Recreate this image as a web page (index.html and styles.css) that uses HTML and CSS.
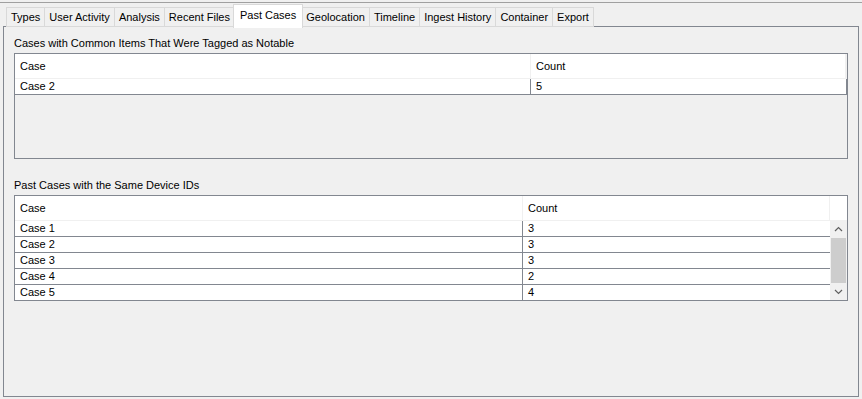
FILE: index.html
```html
<!DOCTYPE html>
<html lang="en">
<head>
    <meta charset="UTF-8">
    <title>Past Cases</title>
    <link rel="stylesheet" href="styles.css">
</head>
<body>
    <div class="frame">
        <div class="tabs">
            <span class="tab">Types</span>
            <span class="tab">User Activity</span>
            <span class="tab">Analysis</span>
            <span class="tab">Recent Files</span>
            <span class="tab active">Past Cases</span>
            <span class="tab">Geolocation</span>
            <span class="tab">Timeline</span>
            <span class="tab">Ingest History</span>
            <span class="tab">Container</span>
            <span class="tab">Export</span>
        </div>
        <div class="panel">
            <div class="label">Cases with Common Items That Were Tagged as Notable</div>
            <div class="table notable">
                <div class="head">
                    <span class="col1">Case</span><span class="col2">Count</span>
                </div>
                <div class="row">
                    <span class="col1">Case 2</span><span class="col2">5</span>
                </div>
            </div>

            <div class="label second">Past Cases with the Same Device IDs</div>
            <div class="table devices">
                <div class="head">
                    <span class="col1">Case</span><span class="col2">Count</span><span class="corner"></span>
                </div>
                <div class="body">
                    <div class="rows">
                        <div class="row"><span class="col1">Case 1</span><span class="col2">3</span></div>
                        <div class="row"><span class="col1">Case 2</span><span class="col2">3</span></div>
                        <div class="row"><span class="col1">Case 3</span><span class="col2">3</span></div>
                        <div class="row"><span class="col1">Case 4</span><span class="col2">2</span></div>
                        <div class="row"><span class="col1">Case 5</span><span class="col2">4</span></div>
                    </div>
                    <div class="scrollbar">
                        <svg class="arrow" width="17" height="17" viewBox="0 0 17 17"><path d="M5 10 L8.5 6.5 L12 10" fill="none" stroke="#606060" stroke-width="1.2"/></svg>
                        <div class="thumb"></div>
                        <svg class="arrow" width="17" height="17" viewBox="0 0 17 17"><path d="M5 7 L8.5 10.5 L12 7" fill="none" stroke="#606060" stroke-width="1.2"/></svg>
                    </div>
                </div>
            </div>
        </div>
    </div>
</body>
</html>
```

FILE: styles.css
```css
*{
    margin:0;
    padding:0;
    box-sizing:border-box;
}
html,body{
    height:100%;
}
body{
    background:#f0f0f0;
    font-family:"Liberation Sans", Arial, sans-serif;
    font-size:11px;
    color:#000;
    overflow:hidden;
}
.frame{
    margin-top:2px;
    border-top:1px solid #a0a0a0;
    height:397px;
    display:flex;
    flex-direction:column;
}
.tabs{
    display:flex;
    align-items:flex-end;
    padding-left:6px;
    height:23px;
    position:relative;
    z-index:2;
}
.tab{
    height:20px;
    line-height:18px;
    padding:0 4px;
    border:1px solid #d9d9d9;
    border-right:none;
    background:#f0f0f0;
    white-space:nowrap;
    margin-bottom:-1px;
}
.tab:last-child{
    border-right:1px solid #d9d9d9;
}
.tab.active{
    height:24px;
    line-height:20px;
    background:#fff;
    border:1px solid #d9d9d9;
    border-bottom:none;
    margin:0 -1px -2px -1px;
    padding:0 6px;
    position:relative;
}
.tab.active + .tab{
    border-left:none;
}
.panel{
    flex:1;
    margin:0 3px 2px 3px;
    border:1px solid #828790;
    padding:0 10px;
    display:flex;
    flex-direction:column;
}
.label{
    margin-top:8px;
    height:18px;
    line-height:16px;
}
.label.second{
    margin-top:18px;
}
.table{
    border:1px solid #828790;
    background:#f0f0f0;
}
.notable{
    height:106px;
}
.head{
    display:flex;
    height:25px;
    background:#fff;
    border-bottom:1px solid #f0f0f0;
}
.head span{
    line-height:24px;
    padding-left:5px;
    border-right:1px solid #f0f0f0;
}
.row{
    display:flex;
    height:16px;
    background:#fff;
    border-bottom:1px solid #828790;
}
.row span{
    line-height:15px;
    padding-left:5px;
}
.row .col1{
    border-right:1px solid #828790;
}
.notable .col1{
    width:516px;
}
.notable .col2{
    flex:1;
}
.notable .row{
    border-right:1px solid #828790;
}
.notable .head{
    border-right:1px solid #f0f0f0;
}
.devices{
    height:106px;
    overflow:hidden;
}
.devices .col1{
    width:508px;
}
.devices .col2{
    flex:1;
}
.devices .head .corner{
    width:17px;
    background:#fff;
    border-right:none;
    padding:0;
}
.body{
    display:flex;
    height:79px;
}
.rows{
    flex:1;
    overflow:hidden;
}
.devices .row:last-child{
    border-bottom:none;
}
.scrollbar{
    width:17px;
    background:#f0f0f0;
    display:flex;
    flex-direction:column;
}
.arrow{
    display:block;
}
.thumb{
    flex:1;
    margin:0 1px;
    background:#cdcdcd;
}
```
